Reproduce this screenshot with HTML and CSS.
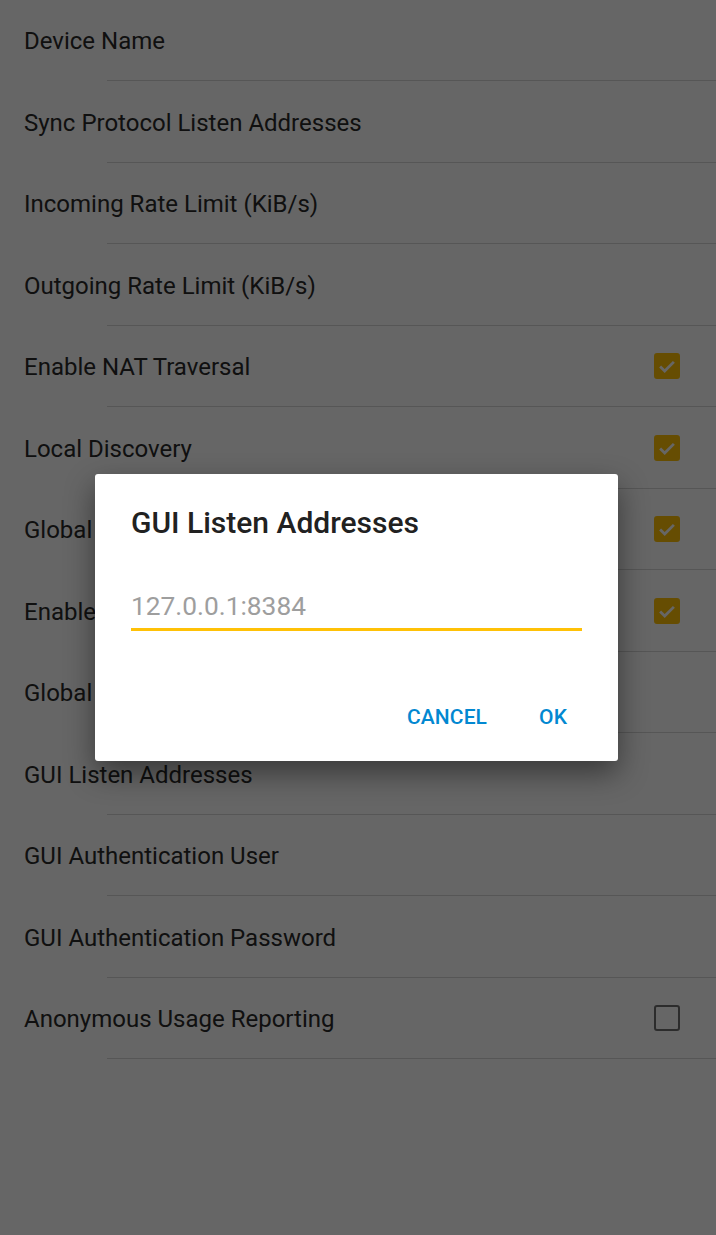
FILE: index.html
```html
<!DOCTYPE html>
<html>
<head>
<meta charset="utf-8">
<link rel="stylesheet" href="styles.css">
</head>
<body>
<div class="screen">
  <ul class="prefs">
    <li class="row"><span class="label">Device Name</span></li>
    <li class="row"><span class="label">Sync Protocol Listen Addresses</span></li>
    <li class="row"><span class="label">Incoming Rate Limit (KiB/s)</span></li>
    <li class="row"><span class="label">Outgoing Rate Limit (KiB/s)</span></li>
    <li class="row"><span class="label">Enable NAT Traversal</span><span class="box checked"><svg viewBox="0 0 24 24" width="22" height="22"><path d="M4.5 12.5l5 5 10-10" fill="none" stroke="#fff" stroke-width="3"/></svg></span></li>
    <li class="row"><span class="label">Local Discovery</span><span class="box checked"><svg viewBox="0 0 24 24" width="22" height="22"><path d="M4.5 12.5l5 5 10-10" fill="none" stroke="#fff" stroke-width="3"/></svg></span></li>
    <li class="row"><span class="label">Global Discovery</span><span class="box checked"><svg viewBox="0 0 24 24" width="22" height="22"><path d="M4.5 12.5l5 5 10-10" fill="none" stroke="#fff" stroke-width="3"/></svg></span></li>
    <li class="row"><span class="label">Enable Relaying</span><span class="box checked"><svg viewBox="0 0 24 24" width="22" height="22"><path d="M4.5 12.5l5 5 10-10" fill="none" stroke="#fff" stroke-width="3"/></svg></span></li>
    <li class="row"><span class="label">Global Announce Servers</span></li>
    <li class="row"><span class="label">GUI Listen Addresses</span></li>
    <li class="row"><span class="label">GUI Authentication User</span></li>
    <li class="row"><span class="label">GUI Authentication Password</span></li>
    <li class="row"><span class="label">Anonymous Usage Reporting</span><span class="box"></span></li>
  </ul>
  <div class="scrim"></div>
  <div class="dialog">
    <h2 class="dialog-title">GUI Listen Addresses</h2>
    <div class="field"><span class="placeholder">127.0.0.1:8384</span></div>
    <div class="actions">
      <button class="btn">CANCEL</button>
      <button class="btn">OK</button>
    </div>
  </div>
</div>
</body>
</html>
```
FILE: styles.css
```css
html, body {
  margin: 0;
  padding: 0;
  background: #fff;
}
body {
  font-family: Roboto, "Liberation Sans", sans-serif;
  width: 716px;
  height: 1235px;
  overflow: hidden;
}
.screen {
  position: relative;
  width: 716px;
  height: 1235px;
  background: #fff;
}
.prefs {
  list-style: none;
  margin: 0;
  padding: 0;
}
.row {
  position: relative;
  height: 81.5px;
  display: flex;
  align-items: center;
  justify-content: space-between;
  padding: 0 36px 0 24px;
  box-sizing: border-box;
}
.row::after {
  content: "";
  position: absolute;
  left: 107px;
  right: 0;
  bottom: 0;
  height: 1px;
  background: #d6d6d6;
}
.row:first-child { margin-top: -0.5px; }
.label {
  font-size: 24px;
  color: #2a2a2a;
  position: relative;
  top: 1px;
}
.box {
  width: 22px;
  height: 22px;
  border: 2.5px solid #6f6f6f;
  border-radius: 3px;
  display: flex;
  align-items: center;
  justify-content: center;
}
.box.checked {
  background: #ffc107;
  border-color: #ffc107;
}
.box svg { display: block; }
.scrim {
  position: absolute;
  inset: 0;
  background: rgba(0, 0, 0, 0.6);
}
.dialog {
  position: absolute;
  left: 95px;
  top: 474px;
  width: 523px;
  height: 287px;
  box-sizing: border-box;
  background: #fff;
  border-radius: 3px;
  box-shadow: 0 12px 30px rgba(0, 0, 0, 0.45);
  padding: 29px 36px 0 36px;
}
.dialog-title {
  margin: 0;
  font-size: 30px;
  font-weight: 500;
  color: #212121;
  line-height: 40px;
}
.field {
  margin-top: 48px;
  border-bottom: 3px solid #ffc107;
  height: 37px;
  display: flex;
  align-items: flex-start;
}
.placeholder {
  font-size: 26.3px;
  color: #9e9e9e;
  line-height: 30px;
}
.actions {
  display: flex;
  justify-content: flex-end;
  gap: 52px;
  margin-top: 74px;
  padding-right: 15px;
}
.btn {
  border: 0;
  background: none;
  padding: 0;
  font-family: Roboto, "Liberation Sans", sans-serif;
  font-size: 21px;
  font-weight: 500;
  letter-spacing: 0.1px;
  color: #0288d1;
  line-height: 24px;
}
```
